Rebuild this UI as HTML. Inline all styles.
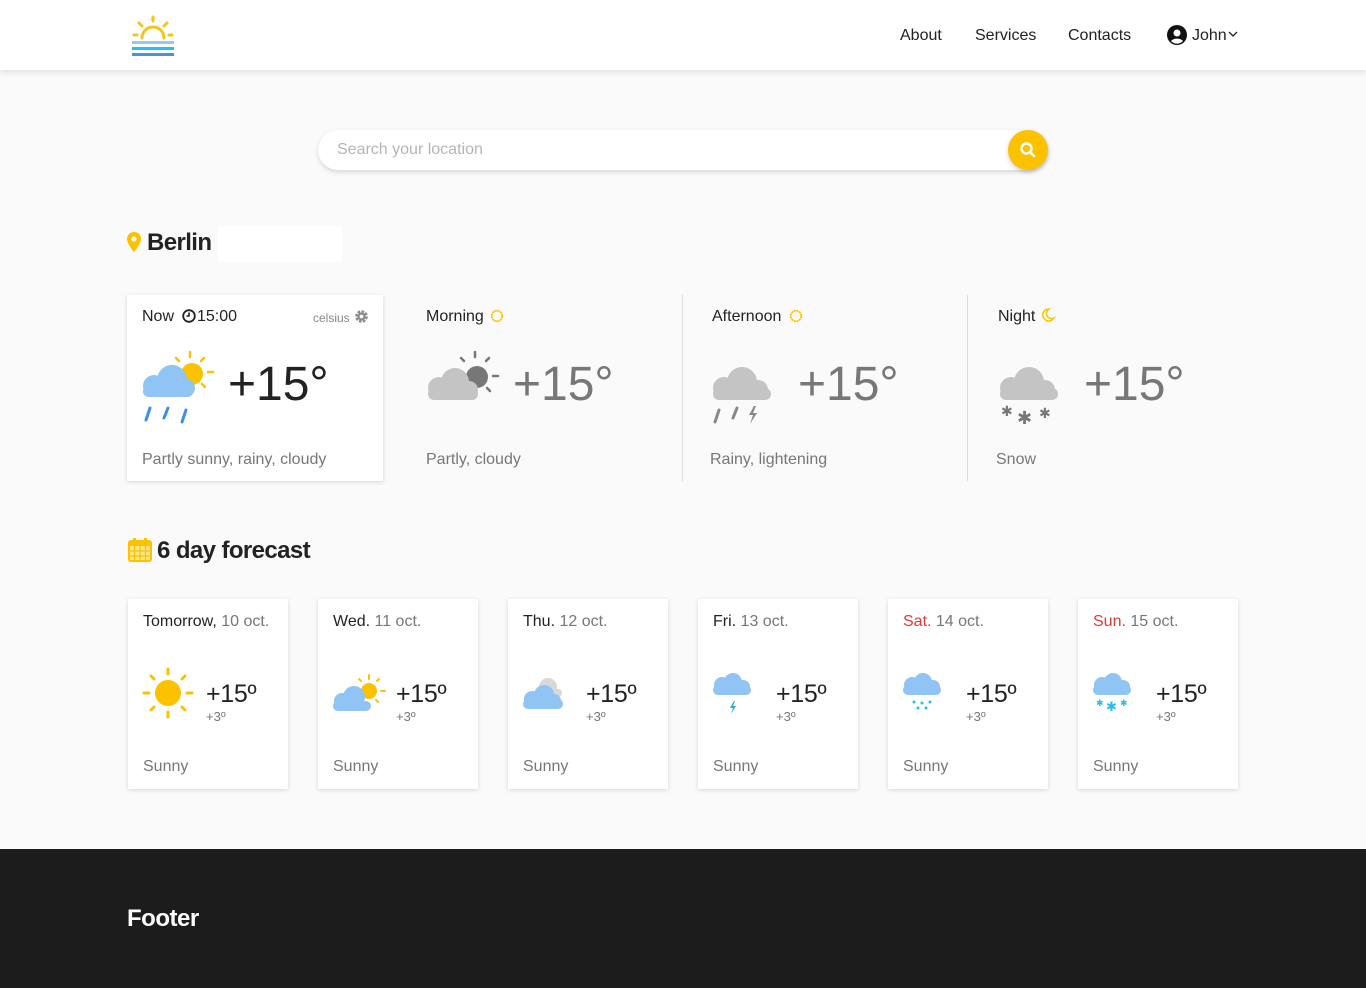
<!DOCTYPE html>
<html><head><meta charset="utf-8"><style>
*{margin:0;padding:0;box-sizing:border-box}
body{width:1366px;height:988px;background:#fafafa;font-family:"Liberation Sans",Arial,sans-serif;color:#222;position:relative;overflow:hidden}
.a{position:absolute}
header{position:absolute;left:0;top:0;width:1366px;height:70px;background:#fff;box-shadow:0 2px 6px rgba(0,0,0,.12)}
.nav{font-size:16px;color:#222;top:27px}
.card{background:#fff;box-shadow:0 1px 4px rgba(0,0,0,.15)}
.t{font-size:16px;color:#222}
.g{color:#777}
.big{font-size:48px;color:#222}
.fc{position:absolute;top:599px;width:160px;height:190px}
.fc .d{position:absolute;left:15px;top:14px;font-size:16px}
.fc .tt{position:absolute;left:78px;top:81px;font-size:25px;color:#222;letter-spacing:-0.3px}
.fc .lo{position:absolute;left:78px;top:110px;font-size:13px;color:#777}
.fc .s{position:absolute;left:15px;top:159px;font-size:16px;color:#777}
.fc svg{position:absolute;left:12px;top:68px}
</style></head><body>
<header>
<svg class="a" style="left:130px;top:14px" width="46" height="44" viewBox="0 0 46 44">
<g stroke="#f5c518" stroke-width="3" stroke-linecap="round" fill="none">
<path d="M12 24a11 11 0 0 1 22 0"/><line x1="23" y1="3" x2="23" y2="7"/><line x1="9" y1="9" x2="12" y2="12"/><line x1="37" y1="9" x2="34" y2="12"/><line x1="4" y1="21" x2="7" y2="21"/><line x1="39" y1="21" x2="42" y2="21"/></g>
<rect x="2" y="27" width="42" height="3" fill="#9cc8f0"/><rect x="2" y="33" width="42" height="3" fill="#22c0ee"/><rect x="2" y="39" width="42" height="3" fill="#4a90e2"/></svg>
<div class="a nav" style="left:900px">About</div>
<div class="a nav" style="left:975px">Services</div>
<div class="a nav" style="left:1068px">Contacts</div>
<svg class="a" style="left:1167px;top:25px" width="20" height="20" viewBox="0 0 20 20"><circle cx="10" cy="10" r="10" fill="#111"/><circle cx="10" cy="8" r="3.5" fill="#fff"/><path d="M4 16a7 5 0 0 1 12 0a8 8 0 0 1-12 0z" fill="#fff"/></svg>
<div class="a nav" style="left:1192px">John</div>
<svg class="a" style="left:1228px;top:31px" width="10" height="7" viewBox="0 0 10 7"><path d="M1 1l4 4 4-4" stroke="#222" stroke-width="1.3" fill="none"/></svg>
</header>

<div class="a" style="left:318px;top:130px;width:730px;height:40px;background:#fff;border-radius:20px;box-shadow:0 2px 5px rgba(0,0,0,.15)"></div>
<div class="a" style="left:337px;top:141px;font-size:16px;color:#b5b5b5">Search your location</div>
<div class="a" style="left:1008px;top:130px;width:40px;height:40px;border-radius:50%;background:#fcc200;box-shadow:0 2px 4px rgba(0,0,0,.2)"></div>
<svg class="a" style="left:1019px;top:141px" width="18" height="18" viewBox="0 0 18 18"><circle cx="7.5" cy="7.5" r="5" stroke="#fff" stroke-width="2.4" fill="none"/><line x1="11" y1="11" x2="15" y2="15" stroke="#fff" stroke-width="2.6" stroke-linecap="round"/></svg>

<svg class="a" style="left:127px;top:232px" width="14" height="20" viewBox="0 0 14 20"><path d="M7 0a7 7 0 0 0-7 7c0 5 7 13 7 13s7-8 7-13a7 7 0 0 0-7-7z" fill="#fcc200"/><circle cx="7" cy="7" r="2.6" fill="#fafafa"/></svg>
<div class="a" style="left:147px;top:229px;font-size:24px;font-weight:bold;color:#222;letter-spacing:-0.6px">Berlin</div>
<div class="a" style="left:218px;top:226px;width:124px;height:36px;background:#fff"></div>

<div class="a card" style="left:127px;top:295px;width:256px;height:186px"></div>
<div class="a t" style="left:142px;top:308px">Now</div>
<svg class="a" style="left:182px;top:309px" width="14" height="14" viewBox="0 0 14 14"><circle cx="7" cy="7" r="5.8" stroke="#222" stroke-width="1.8" fill="none"/><path d="M7 3.5V7H4.5" stroke="#222" stroke-width="1.6" fill="none"/></svg>
<div class="a t" style="left:197px;top:308px">15:00</div>
<div class="a" style="left:313px;top:311px;font-size:12px;color:#888">celsius</div>
<svg class="a" style="left:354px;top:309px" width="15" height="15" viewBox="0 0 16 16"><circle cx="8" cy="8" r="5" fill="none" stroke="#888" stroke-width="3.4" stroke-dasharray="2.6 1.3"/><circle cx="8" cy="8" r="4.2" fill="#888"/><circle cx="8" cy="8" r="2" fill="#fff"/></svg>
<svg class="a" style="left:140px;top:350px" width="80" height="76" viewBox="0 0 80 76">
<g stroke="#fcc200" stroke-width="2.5" stroke-linecap="round"><line x1="50" y1="2" x2="50" y2="7"/><line x1="36" y1="8" x2="39" y2="11"/><line x1="64" y1="8" x2="61" y2="11"/><line x1="68" y1="22" x2="73" y2="22"/><line x1="62" y1="34" x2="65" y2="37"/></g>
<circle cx="52" cy="24" r="11" fill="#fcc200"/>
<g fill="#90c4f4"><circle cx="14" cy="36" r="11"/><circle cx="32" cy="30" r="15"/><circle cx="46" cy="38" r="9"/><rect x="14" y="34" width="32" height="13" rx="6"/><rect x="3" y="36" width="50" height="11" rx="5.5"/></g>
<g stroke="#3a8fe8" stroke-width="3" stroke-linecap="round"><line x1="10" y1="58" x2="6" y2="70"/><line x1="28" y1="58" x2="24" y2="68"/><line x1="46" y1="60" x2="42" y2="72"/></g></svg>
<div class="a big" style="left:228px;top:357px">+15°</div>
<div class="a g" style="left:142px;top:451px;font-size:16px">Partly sunny, rainy, cloudy</div>

<div class="a t" style="left:426px;top:308px">Morning</div>
<svg class="a" style="left:489px;top:308px" width="16" height="16" viewBox="0 0 16 16"><circle cx="8" cy="8" r="5.3" fill="none" stroke="#fcc200" stroke-width="1.8" stroke-dasharray="2.2 0.6"/></svg>
<svg class="a" style="left:425px;top:350px" width="80" height="55" viewBox="0 0 80 55">
<g stroke="#777" stroke-width="2.5" stroke-linecap="round"><line x1="50" y1="2" x2="50" y2="7"/><line x1="36" y1="8" x2="39" y2="11"/><line x1="64" y1="8" x2="61" y2="11"/><line x1="68" y1="26" x2="73" y2="26"/><line x1="62" y1="38" x2="65" y2="41"/></g>
<circle cx="52" cy="27" r="11" fill="#777"/>
<g fill="#c4c4c4"><circle cx="14" cy="38" r="11"/><circle cx="30" cy="32" r="14"/><circle cx="44" cy="40" r="9"/><rect x="3" y="38" width="50" height="12" rx="6"/></g></svg>
<div class="a big" style="left:513px;top:357px;color:#777">+15°</div>
<div class="a g" style="left:426px;top:451px;font-size:16px">Partly, cloudy</div>
<div class="a" style="left:682px;top:295px;width:1px;height:186px;background:#ddd"></div>

<div class="a t" style="left:712px;top:308px">Afternoon</div>
<svg class="a" style="left:788px;top:308px" width="16" height="16" viewBox="0 0 16 16"><circle cx="8" cy="8" r="5.3" fill="none" stroke="#fcc200" stroke-width="1.8" stroke-dasharray="2.2 0.6"/></svg>
<svg class="a" style="left:710px;top:364px" width="64" height="62" viewBox="0 0 64 62">
<g fill="#c4c4c4"><circle cx="14" cy="24" r="11"/><circle cx="32" cy="18" r="15"/><circle cx="48" cy="26" r="10"/><rect x="3" y="24" width="58" height="12" rx="6"/></g>
<g stroke="#888" stroke-width="3" stroke-linecap="round"><line x1="9" y1="46" x2="5" y2="58"/><line x1="27" y1="44" x2="23" y2="54"/></g><path d="M44 42l-5 9h4l-3 9 7-11h-4l3-7z" fill="#888"/></svg>
<div class="a big" style="left:798px;top:357px;color:#777">+15°</div>
<div class="a g" style="left:710px;top:451px;font-size:16px">Rainy, lightening</div>
<div class="a" style="left:967px;top:295px;width:1px;height:186px;background:#ddd"></div>

<div class="a t" style="left:998px;top:308px">Night</div>
<svg class="a" style="left:1040px;top:307px" width="16" height="16" viewBox="0 0 16 16"><path d="M9 2a6 6 0 1 0 5 9a5 5 0 0 1-5-9z" fill="none" stroke="#fcc200" stroke-width="1.5"/></svg>
<svg class="a" style="left:997px;top:364px" width="64" height="64" viewBox="0 0 64 64">
<g fill="#c4c4c4"><circle cx="14" cy="24" r="11"/><circle cx="32" cy="18" r="15"/><circle cx="48" cy="26" r="10"/><rect x="3" y="24" width="58" height="12" rx="6"/></g>
<g fill="#777" font-size="14" font-family="DejaVu Sans"><text x="4" y="52">✱</text><text x="20" y="60" font-size="18">✱</text><text x="42" y="54">✱</text></g></svg>
<div class="a big" style="left:1084px;top:357px;color:#777">+15°</div>
<div class="a g" style="left:996px;top:451px;font-size:16px">Snow</div>

<svg class="a" style="left:128px;top:538px" width="24" height="24" viewBox="0 0 24 24"><rect x="1" y="3" width="22" height="20" rx="2" fill="#fde58a" stroke="#fcc200" stroke-width="2"/><rect x="1" y="3" width="22" height="5" fill="#fcc200"/><g stroke="#fcc200" stroke-width="1.2"><line x1="6.5" y1="8" x2="6.5" y2="23"/><line x1="12" y1="8" x2="12" y2="23"/><line x1="17.5" y1="8" x2="17.5" y2="23"/><line x1="1" y1="13" x2="23" y2="13"/><line x1="1" y1="18" x2="23" y2="18"/></g><rect x="5" y="0" width="3" height="6" fill="#fcc200"/><rect x="16" y="0" width="3" height="6" fill="#fcc200"/></svg>
<div class="a" style="left:157px;top:537px;font-size:24px;font-weight:bold;color:#222;letter-spacing:-0.6px">6 day forecast</div>

<div class="fc card" style="left:128px"><div class="d">Tomorrow, <span class="g">10 oct.</span></div>
<svg width="56" height="56" viewBox="0 0 56 56" style="left:12px;top:66px"><g stroke="#fcc200" stroke-width="3" stroke-linecap="round"><line x1="28" y1="4" x2="28" y2="9"/><line x1="28" y1="47" x2="28" y2="52"/><line x1="4" y1="28" x2="9" y2="28"/><line x1="47" y1="28" x2="52" y2="28"/><line x1="11" y1="11" x2="14" y2="14"/><line x1="45" y1="11" x2="42" y2="14"/><line x1="11" y1="45" x2="14" y2="42"/><line x1="45" y1="45" x2="42" y2="42"/></g><circle cx="28" cy="28" r="13" fill="#fcc200"/></svg>
<div class="tt">+15º</div><div class="lo">+3º</div><div class="s">Sunny</div></div>

<div class="fc card" style="left:318px"><div class="d">Wed. <span class="g">11 oct.</span></div>
<svg width="56" height="50" viewBox="0 0 56 50" style="left:14px;top:74px"><g stroke="#fcc200" stroke-width="2" stroke-linecap="round"><line x1="37" y1="2" x2="37" y2="6"/><line x1="27" y1="6" x2="29" y2="8"/><line x1="47" y1="6" x2="45" y2="8"/><line x1="49" y1="18" x2="53" y2="18"/><line x1="44" y1="27" x2="46" y2="29"/></g><circle cx="37" cy="18" r="8" fill="#fcc200"/><g fill="#90c4f4"><circle cx="10" cy="28" r="8"/><circle cx="22" cy="24" r="11"/><rect x="1" y="28" width="38" height="10" rx="5"/></g></svg>
<div class="tt">+15º</div><div class="lo">+3º</div><div class="s">Sunny</div></div>

<div class="fc card" style="left:508px"><div class="d">Thu. <span class="g">12 oct.</span></div>
<svg width="56" height="50" viewBox="0 0 56 50" style="left:14px;top:74px"><g fill="#d8d8d8"><circle cx="26" cy="14" r="9"/><rect x="16" y="16" width="24" height="8" rx="4"/></g><g fill="#90c4f4"><circle cx="10" cy="26" r="8"/><circle cx="22" cy="22" r="10"/><circle cx="32" cy="28" r="7"/><rect x="1" y="26" width="40" height="10" rx="5"/></g></svg>
<div class="tt">+15º</div><div class="lo">+3º</div><div class="s">Sunny</div></div>

<div class="fc card" style="left:698px"><div class="d">Fri. <span class="g">13 oct.</span></div>
<svg width="56" height="50" viewBox="0 0 56 50" style="left:14px;top:74px"><g fill="#90c4f4"><circle cx="10" cy="12" r="8"/><circle cx="21" cy="9" r="9"/><circle cx="31" cy="14" r="7"/><rect x="1" y="12" width="38" height="10" rx="5"/></g><path d="M22 28l-4 7h3l-2 6 5-8h-3l2-5z" fill="#22a8e8"/></svg>
<div class="tt">+15º</div><div class="lo">+3º</div><div class="s">Sunny</div></div>

<div class="fc card" style="left:888px"><div class="d" style="color:#e53935">Sat. <span class="g">14 oct.</span></div>
<svg width="56" height="50" viewBox="0 0 56 50" style="left:14px;top:74px"><g fill="#90c4f4"><circle cx="10" cy="12" r="8"/><circle cx="21" cy="9" r="9"/><circle cx="31" cy="14" r="7"/><rect x="1" y="12" width="38" height="10" rx="5"/></g><g fill="#22c0ee"><circle cx="12" cy="29" r="1.5"/><circle cx="20" cy="30" r="1.5"/><circle cx="28" cy="29" r="1.5"/><circle cx="16" cy="35" r="1.5"/><circle cx="24" cy="35" r="1.5"/></g></svg>
<div class="tt">+15º</div><div class="lo">+3º</div><div class="s">Sunny</div></div>

<div class="fc card" style="left:1078px"><div class="d" style="color:#e53935">Sun. <span class="g">15 oct.</span></div>
<svg width="56" height="50" viewBox="0 0 56 50" style="left:14px;top:74px"><g fill="#90c4f4"><circle cx="10" cy="12" r="8"/><circle cx="21" cy="9" r="9"/><circle cx="31" cy="14" r="7"/><rect x="1" y="12" width="38" height="10" rx="5"/></g><g fill="#22c0ee" font-family="DejaVu Sans"><text x="4" y="33" font-size="9">✱</text><text x="14" y="38" font-size="13">✱</text><text x="28" y="33" font-size="9">✱</text></g></svg>
<div class="tt">+15º</div><div class="lo">+3º</div><div class="s">Sunny</div></div>

<div class="a" style="left:0;top:849px;width:1366px;height:139px;background:#1c1c1c"></div>
<div class="a" style="left:127px;top:905px;font-size:24px;font-weight:bold;color:#fff;letter-spacing:-0.5px">Footer</div>
</body></html>
